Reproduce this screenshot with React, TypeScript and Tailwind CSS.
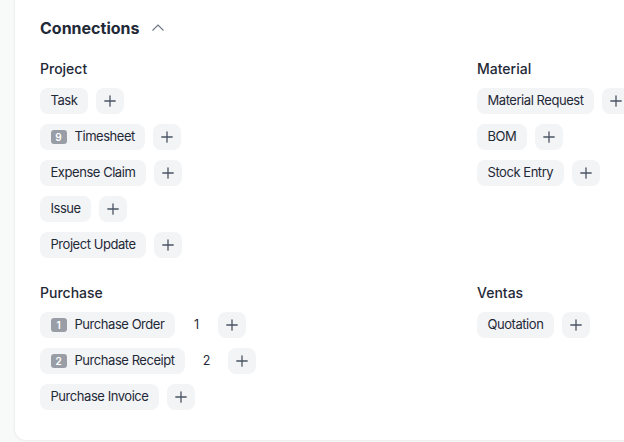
import React from "react";

type Item = { label: string; badge?: number; count?: number };

const Plus = () => (
  <svg width="12" height="12" viewBox="0 0 12 12" fill="none">
    <path d="M6 0.8v10.4M0.8 6h10.4" stroke="#4b5563" strokeWidth="1.3" strokeLinecap="round" />
  </svg>
);

const Row = ({ item }: { item: Item }) => (
  <div className="flex items-center gap-2">
    <div className="flex h-[26px] items-center rounded-lg bg-[#f3f4f6] px-[10.5px] text-[13px] tracking-[-0.45px] text-[#1f2937]">
      {item.badge !== undefined && (
        <span className="mr-[8px] flex h-[14px] w-[16px] items-center justify-center rounded-[3px] bg-[#999ea6] text-[10px] font-semibold leading-none tracking-normal text-white">
          {item.badge}
        </span>
      )}
      {item.label}
    </div>
    {item.count !== undefined && (
      <span className="w-[27px] text-center text-[12.5px] text-[#1f2937]">{item.count}</span>
    )}
    <div className="flex h-[26px] w-[28px] items-center justify-center rounded-lg bg-[#f3f4f6]">
      <Plus />
    </div>
  </div>
);

const Section = ({ title, items }: { title: string; items: Item[] }) => (
  <div className="flex flex-col">
    <div className="mb-[9px] h-[20px] text-[14px] font-medium leading-[20px] text-[#1f2937]">{title}</div>
    <div className="flex flex-col gap-[10px]">
      {items.map((it) => (
        <Row key={it.label} item={it} />
      ))}
    </div>
  </div>
);

export default function App() {
  return (
    <div
      className="flex h-[442px] w-[624px] overflow-hidden bg-[#f8f9f9]"
      style={{ fontFamily: "Inter, 'Noto Sans', sans-serif" }}
    >
      <div className="ml-[14px] h-[441px] w-[800px] shrink-0 rounded-bl-xl border-l border-b border-[#efefef] bg-white pl-[25px] pt-[14px] shadow-[0_0_2px_rgba(0,0,0,0.05)]">
        <div className="flex h-[28px] items-center">
          <span className="text-[16px] font-bold text-[#1f2937]">Connections</span>
          <svg className="ml-[12px]" width="14" height="10" viewBox="0 0 14 10" fill="none">
            <path d="M1.5 7.5L7 2l5.5 5.5" stroke="#6b7280" strokeWidth="1.1" />
          </svg>
        </div>
        <div className="mt-[17px] grid grid-cols-[437px_1fr] gap-y-[25px]">
          <Section
            title="Project"
            items={[
              { label: "Task" },
              { label: "Timesheet", badge: 9 },
              { label: "Expense Claim" },
              { label: "Issue" },
              { label: "Project Update" },
            ]}
          />
          <Section
            title="Material"
            items={[{ label: "Material Request" }, { label: "BOM" }, { label: "Stock Entry" }]}
          />
          <Section
            title="Purchase"
            items={[
              { label: "Purchase Order", badge: 1, count: 1 },
              { label: "Purchase Receipt", badge: 2, count: 2 },
              { label: "Purchase Invoice" },
            ]}
          />
          <Section title="Ventas" items={[{ label: "Quotation" }]} />
        </div>
      </div>
    </div>
  );
}
